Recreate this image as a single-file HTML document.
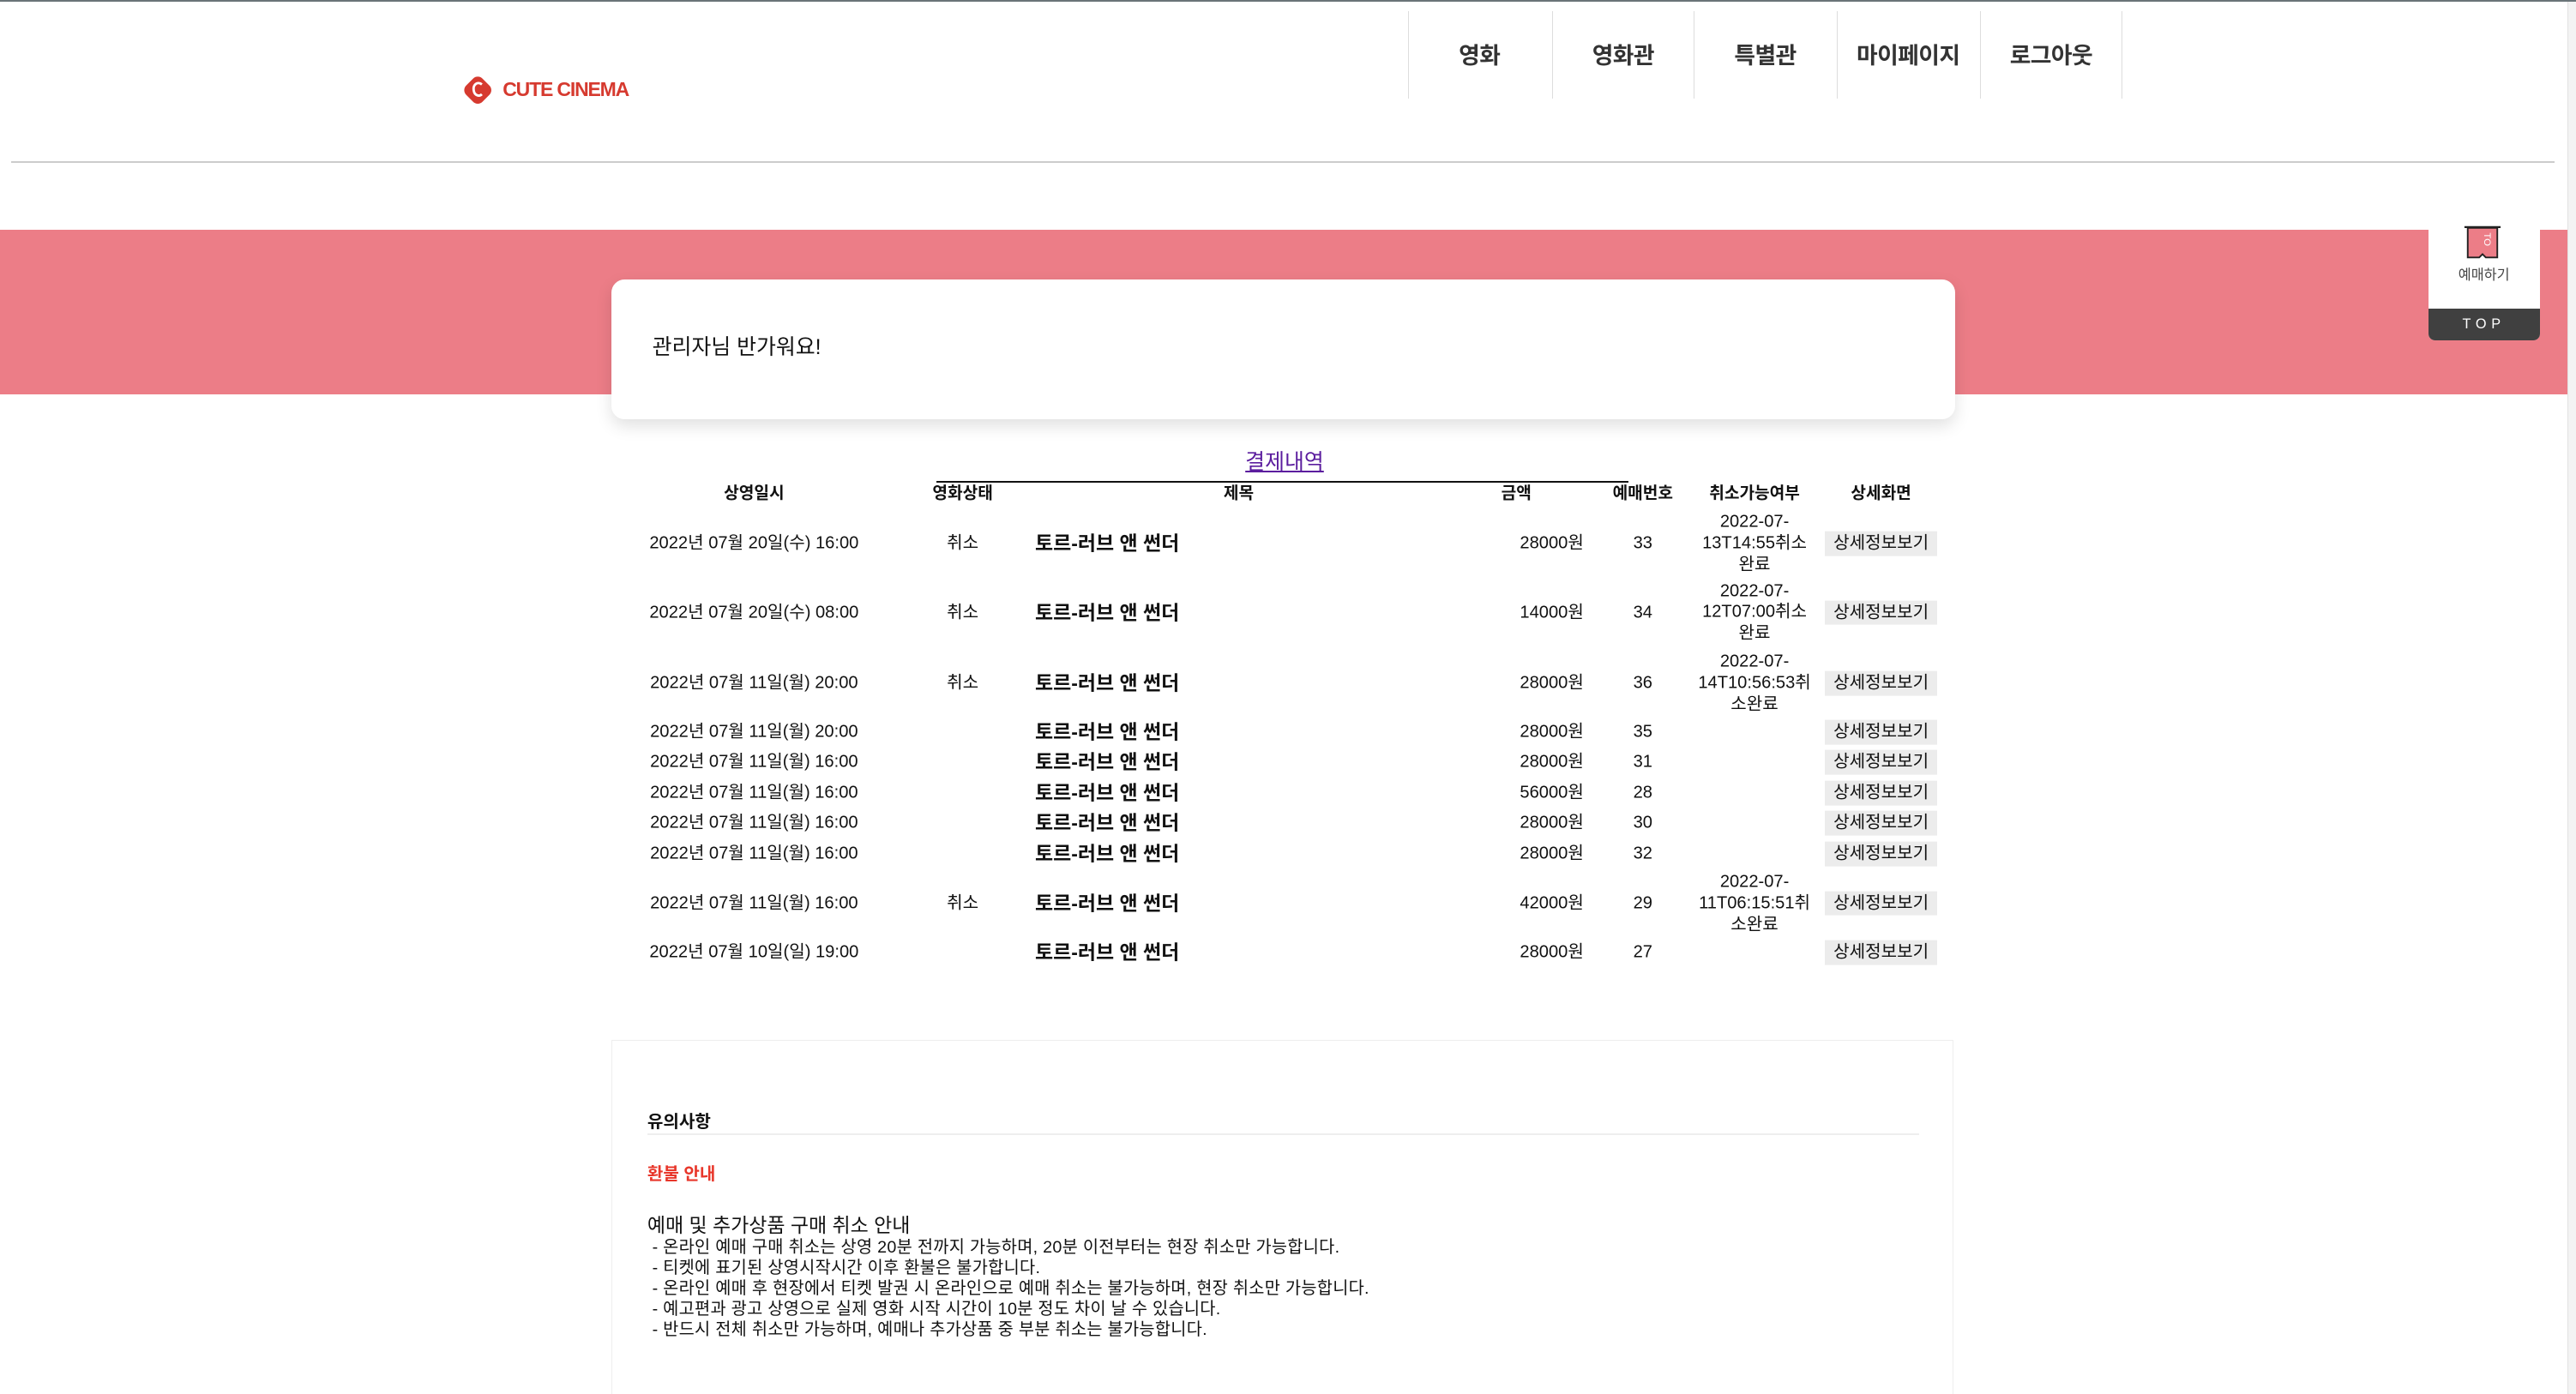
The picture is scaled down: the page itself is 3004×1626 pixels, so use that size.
<!DOCTYPE html>
<html><head><meta charset="utf-8">
<style>
html,body{margin:0;padding:0;background:#fff;overflow:hidden}
body{width:3004px;height:1626px;position:relative}
#w{zoom:1.9158;width:1568px;height:849px;position:relative;font-family:"Liberation Sans","Noto Sans CJK KR",sans-serif;color:#111}
.a{position:absolute;white-space:nowrap}
.nav{position:absolute;top:7px;height:53px;border-left:1px solid #ddd;width:86px;text-align:center;line-height:55px;font-size:14px;font-weight:bold;color:#333;letter-spacing:-0.3px}
.c{position:absolute;font-size:10.5px;transform:translate(-50%,-50%);text-align:center;line-height:13px}
.t{position:absolute;font-size:12px;line-height:13px;font-weight:bold;transform:translateY(-50%)}
.r{position:absolute;font-size:10.5px;line-height:13px;transform:translate(-100%,-50%)}
.b{position:absolute;left:1111px;width:68px;height:15px;background:#ececec;font-size:10.5px;text-align:center;line-height:15px;transform:translateY(-50%)}
.h{position:absolute;font-size:10px;line-height:13px;font-weight:bold;transform:translate(-50%,-50%)}
</style></head><body><div id="w">
<div class="a" style="left:0;top:0;width:1568px;height:1px;background:#6a7478"></div>
<svg class="a" style="left:281px;top:45px" width="20" height="20" viewBox="0 0 20 20"><rect x="3" y="3" width="14" height="14" rx="4" transform="rotate(45 10 10)" fill="#d63a2f"/><path d="M12.5 6.5 C10 4.5 7 6.5 7.5 10 C8 13.5 11 14 12.5 12.5" stroke="#fff" stroke-width="1.5" fill="none"/></svg>
<div class="a" style="left:306px;top:48px;font-size:12px;line-height:13px;font-weight:900;color:#d63a2f;letter-spacing:-0.6px;font-family:'Liberation Sans',sans-serif">CUTE CINEMA</div>
<div class="nav" style="left:857px">영화</div>
<div class="nav" style="left:945px;width:85px">영화관</div>
<div class="nav" style="left:1031px">특별관</div>
<div class="nav" style="left:1118px">마이페이지</div>
<div class="nav" style="left:1205px;border-right:1px solid #ddd">로그아웃</div>
<div class="a" style="left:7px;top:98px;width:1548px;height:1px;background:#ccc"></div>
<div class="a" style="left:1563px;top:1px;width:5px;height:848px;background:#f3f3f3;border-left:1px solid #e2e2e2"></div>
<div class="a" style="left:0;top:140px;width:1563px;height:100px;background:#ec7d87"></div>
<div class="a" style="left:372px;top:170px;width:818px;height:85px;background:#fff;border-radius:8px;box-shadow:0 4px 10px rgba(0,0,0,0.12)"></div>
<div class="a" style="left:397px;top:204px;font-size:13px;line-height:15px">관리자님 반가워요!</div>
<div class="a" style="left:1478px;top:132px;width:68px;height:75px;background:#fff;border-radius:0 0 4px 4px;overflow:hidden">
<div class="a" style="left:0;top:56px;width:68px;height:19px;background:#404040;color:#fff;font-size:8.5px;text-align:center;line-height:19px;letter-spacing:3px">TOP</div>
<div class="a" style="left:0;top:31px;width:68px;text-align:center;font-size:8.5px;line-height:10px;color:#444">예매하기</div>
</div>
<svg class="a" style="left:1499px;top:137px" width="24" height="22" viewBox="0 0 24 22"><path d="M1 1.5H23" stroke="#222" stroke-width="1.2"/><path d="M3 2V20H10L12 18L14 20H21V2Z" fill="#ec7d87" stroke="#222" stroke-width="1"/><text x="12" y="8" font-size="6" fill="#fff" text-anchor="middle" transform="rotate(90 12 9)" font-family="Liberation Sans">TO</text></svg>
<div class="a" style="left:758px;top:274px;font-size:13px;line-height:15px;color:#5b1d9e;text-decoration:underline">결제내역</div>
<div class="a" style="left:570px;top:293px;width:421px;height:1px;background:#111"></div>
<div class="h" style="left:459px;top:301px">상영일시</div>
<div class="h" style="left:586px;top:301px">영화상태</div>
<div class="h" style="left:754px;top:301px">제목</div>
<div class="h" style="left:923px;top:301px">금액</div>
<div class="h" style="left:1000px;top:301px">예매번호</div>
<div class="h" style="left:1068px;top:301px">취소가능여부</div>
<div class="h" style="left:1145px;top:301px">상세화면</div>

<div class="c" style="left:459px;top:331px">2022년 07월 20일(수) 16:00</div><div class="c" style="left:586px;top:331px">취소</div><div class="t" style="left:630px;top:331px">토르-러브 앤 썬더</div><div class="r" style="left:964px;top:331px">28000원</div><div class="c" style="left:1000px;top:331px">33</div><div class="c" style="left:1068px;top:331px;width:70px;white-space:normal">2022-07-<br>13T14:55취소<br>완료</div><div class="b" style="top:331px">상세정보보기</div>

<div class="c" style="left:459px;top:373px">2022년 07월 20일(수) 08:00</div><div class="c" style="left:586px;top:373px">취소</div><div class="t" style="left:630px;top:373px">토르-러브 앤 썬더</div><div class="r" style="left:964px;top:373px">14000원</div><div class="c" style="left:1000px;top:373px">34</div><div class="c" style="left:1068px;top:373px;width:70px;white-space:normal">2022-07-<br>12T07:00취소<br>완료</div><div class="b" style="top:373px">상세정보보기</div>

<div class="c" style="left:459px;top:416px">2022년 07월 11일(월) 20:00</div><div class="c" style="left:586px;top:416px">취소</div><div class="t" style="left:630px;top:416px">토르-러브 앤 썬더</div><div class="r" style="left:964px;top:416px">28000원</div><div class="c" style="left:1000px;top:416px">36</div><div class="c" style="left:1068px;top:416px;width:70px;white-space:normal">2022-07-<br>14T10:56:53취<br>소완료</div><div class="b" style="top:416px">상세정보보기</div>

<div class="c" style="left:459px;top:446px">2022년 07월 11일(월) 20:00</div><div class="t" style="left:630px;top:446px">토르-러브 앤 썬더</div><div class="r" style="left:964px;top:446px">28000원</div><div class="c" style="left:1000px;top:446px">35</div><div class="b" style="top:446px">상세정보보기</div>
<div class="c" style="left:459px;top:464px">2022년 07월 11일(월) 16:00</div><div class="t" style="left:630px;top:464px">토르-러브 앤 썬더</div><div class="r" style="left:964px;top:464px">28000원</div><div class="c" style="left:1000px;top:464px">31</div><div class="b" style="top:464px">상세정보보기</div>
<div class="c" style="left:459px;top:483px">2022년 07월 11일(월) 16:00</div><div class="t" style="left:630px;top:483px">토르-러브 앤 썬더</div><div class="r" style="left:964px;top:483px">56000원</div><div class="c" style="left:1000px;top:483px">28</div><div class="b" style="top:483px">상세정보보기</div>
<div class="c" style="left:459px;top:501px">2022년 07월 11일(월) 16:00</div><div class="t" style="left:630px;top:501px">토르-러브 앤 썬더</div><div class="r" style="left:964px;top:501px">28000원</div><div class="c" style="left:1000px;top:501px">30</div><div class="b" style="top:501px">상세정보보기</div>
<div class="c" style="left:459px;top:520px">2022년 07월 11일(월) 16:00</div><div class="t" style="left:630px;top:520px">토르-러브 앤 썬더</div><div class="r" style="left:964px;top:520px">28000원</div><div class="c" style="left:1000px;top:520px">32</div><div class="b" style="top:520px">상세정보보기</div>

<div class="c" style="left:459px;top:550px">2022년 07월 11일(월) 16:00</div><div class="c" style="left:586px;top:550px">취소</div><div class="t" style="left:630px;top:550px">토르-러브 앤 썬더</div><div class="r" style="left:964px;top:550px">42000원</div><div class="c" style="left:1000px;top:550px">29</div><div class="c" style="left:1068px;top:550px;width:70px;white-space:normal">2022-07-<br>11T06:15:51취<br>소완료</div><div class="b" style="top:550px">상세정보보기</div>

<div class="c" style="left:459px;top:580px">2022년 07월 10일(일) 19:00</div><div class="t" style="left:630px;top:580px">토르-러브 앤 썬더</div><div class="r" style="left:964px;top:580px">28000원</div><div class="c" style="left:1000px;top:580px">27</div><div class="b" style="top:580px">상세정보보기</div>

<div class="a" style="left:372px;top:633px;width:816px;height:230px;border:1px solid #eee"></div>
<div class="a" style="left:394px;top:677px;font-size:10.5px;line-height:13px;font-weight:bold">유의사항</div>
<div class="a" style="left:394px;top:690px;width:774px;height:1px;background:#eee"></div>
<div class="a" style="left:394px;top:709px;font-size:10.5px;line-height:13px;font-weight:bold;color:#e8372b">환불 안내</div>
<div class="a" style="left:394px;top:739px;font-size:12px;line-height:14px">예매 및 추가상품 구매 취소 안내</div>
<div class="a" style="left:397px;top:753px;font-size:10.3px;line-height:12.6px;letter-spacing:0.15px">- 온라인 예매 구매 취소는 상영 20분 전까지 가능하며, 20분 이전부터는 현장 취소만 가능합니다.<br>- 티켓에 표기된 상영시작시간 이후 환불은 불가합니다.<br>- 온라인 예매 후 현장에서 티켓 발권 시 온라인으로 예매 취소는 불가능하며, 현장 취소만 가능합니다.<br>- 예고편과 광고 상영으로 실제 영화 시작 시간이 10분 정도 차이 날 수 있습니다.<br>- 반드시 전체 취소만 가능하며, 예매나 추가상품 중 부분 취소는 불가능합니다.</div>
</div></body></html>
